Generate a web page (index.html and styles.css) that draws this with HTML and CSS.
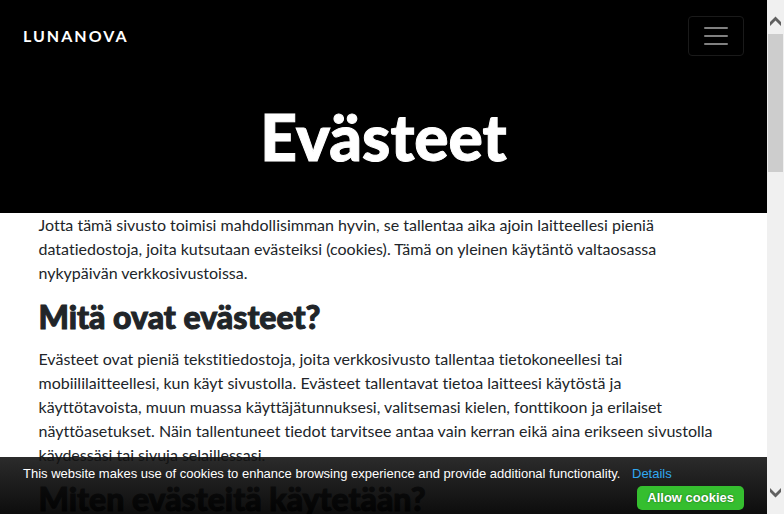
FILE: index.html
```html
<!DOCTYPE html>
<html lang="fi">
<head>
<meta charset="utf-8">
<meta name="viewport" content="width=device-width, initial-scale=1">
<title>Evästeet – Lunanova</title>
<link rel="stylesheet" href="styles.css">
</head>
<body>
<div class="page">
  <header class="masthead">
    <nav class="navbar">
      <a class="brand" href="#">LUNANOVA</a>
      <button class="toggler" type="button" aria-label="Valikko">
        <svg width="30" height="30" viewBox="0 0 30 30" aria-hidden="true"><path d="M4 7h22M4 15h22M4 23h22" stroke="#808080" stroke-width="2" stroke-linecap="round"/></svg>
      </button>
    </nav>
    <h1>Evästeet</h1>
  </header>
  <main class="content">
    <p>Jotta tämä sivusto toimisi mahdollisimman hyvin, se tallentaa aika ajoin laitteellesi pieniä datatiedostoja, joita kutsutaan evästeiksi (cookies). Tämä on yleinen käytäntö valtaosassa nykypäivän verkkosivustoissa.</p>
    <h2>Mitä ovat evästeet?</h2>
    <p>Evästeet ovat pieniä tekstitiedostoja, joita verkkosivusto tallentaa tietokoneellesi tai mobiililaitteellesi, kun käyt sivustolla. Evästeet tallentavat tietoa laitteesi käytöstä ja käyttötavoista, muun muassa käyttäjätunnuksesi, valitsemasi kielen, fonttikoon ja erilaiset näyttöasetukset. Näin tallentuneet tiedot tarvitsee antaa vain kerran eikä aina erikseen sivustolla käydessäsi tai sivuja selaillessasi.</p>
    <h2>Miten evästeitä käytetään?</h2>
  </main>
  <section class="cookie-bar" aria-label="Cookies">
    <p>This website makes use of cookies to enhance browsing experience and provide additional functionality. <a href="#">Details</a></p>
    <button class="allow" type="button">Allow cookies</button>
  </section>
</div>
<div class="scrollbar" aria-hidden="true">
  <svg class="arrow" width="17" height="34" viewBox="0 0 17 34"><path d="M3 26V22L8.500 16.500L14 22V26L8.500 20.500Z" fill="#606060"/></svg>
  <div class="track"><div class="thumb"></div></div>
  <svg class="arrow" width="17" height="34" viewBox="0 0 17 34"><path d="M3 8V12L8.500 17.500L14 12V8L8.500 13.500Z" fill="#606060"/></svg>
</div>
</body>
</html>
```
FILE: styles.css
```css
* {
  box-sizing: border-box;
}

body {
  margin: 0;
  height: 100vh;
  display: flex;
  overflow: hidden;
  font: 16px/24px Lato, sans-serif;
  font-variant-ligatures: none;
  color: #212529;
  background: #fff;
}

.page {
  flex: 1;
  min-width: 0;
  position: relative;
  overflow: hidden;
}

.masthead {
  background: #000;
  color: #fff;
}

.navbar {
  display: flex;
  align-items: center;
  justify-content: space-between;
  padding: 16px 23px;
}

.brand {
  color: #fff;
  font-weight: 700;
  letter-spacing: 2px;
  text-decoration: none;
}

.toggler {
  display: flex;
  align-items: center;
  justify-content: center;
  width: 56px;
  height: 40px;
  padding: 0;
  border: 1px solid #1a1a1a;
  border-radius: 4px;
  background: none;
}

h1,
h2 {
  margin: 0;
  font-weight: 900;
  -webkit-text-stroke: 1px currentColor;
}

h1 {
  padding: 26px 16px 38px;
  font-size: 64px;
  line-height: 77px;
  text-align: center;
}

h2 {
  margin: -3px 0 11px;
  font-size: 32px;
  line-height: 38px;
}

.content {
  max-width: 720px;
  margin: 0 auto;
  padding: 0 15px;
}

.content p {
  margin: 0 0 16px;
}

.cookie-bar {
  position: absolute;
  right: 0;
  bottom: 0;
  left: 0;
  padding: 8px 23px 4px;
  display: flex;
  flex-direction: column;
  background: linear-gradient(rgba(20, 20, 20, 0.9), rgba(0, 0, 0, 0.95));
  color: #fff;
  font: 13px/18px "Liberation Sans", Arial, sans-serif;
}

.cookie-bar p {
  margin: 0 0 3px;
}

.cookie-bar a {
  margin-left: 8px;
  color: #31a8f0;
  text-decoration: none;
}

.allow {
  align-self: flex-end;
  height: 24px;
  padding: 0 10px;
  border: 0;
  border-radius: 5px;
  background: #35be2f;
  color: #fff;
  font: bold 13px/24px "Liberation Sans", Arial, sans-serif;
  text-shadow: 0 0 2px rgba(0, 0, 0, 0.5);
}

.scrollbar {
  flex: none;
  width: 17px;
  display: flex;
  flex-direction: column;
  background: #f0f0f0;
}

.arrow {
  flex: none;
}

.track {
  flex: 1;
  padding: 0 1px;
}

.thumb {
  height: 31%;
  background: #cdcdcd;
}
```
